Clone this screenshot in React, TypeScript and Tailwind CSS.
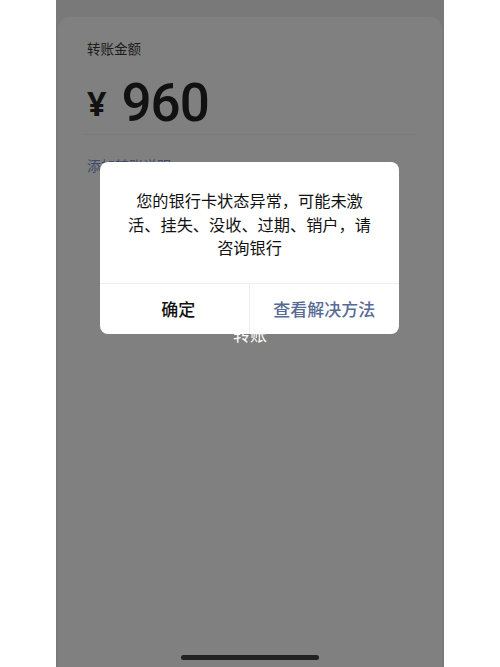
import React from "react";

const cjk = { fontFamily: '"Noto Sans CJK SC", "Noto Sans", sans-serif' };

export default function App() {
  return (
    <div className="w-[500px] h-[667px] bg-white flex justify-center overflow-hidden" style={cjk}>
      <div className="relative w-[388px] h-[667px] bg-[#797979] pt-[17px] px-[2px] flex flex-col">
        <div className="flex-1 bg-[#808080] rounded-t-[12px] px-[29px] pt-[21px] flex flex-col">
          <div className="text-[13.5px] leading-[20px] text-[#1c1c1c]">转账金额</div>
          <div className="mt-[19px] flex items-center h-[52px]">
            <span
              className="text-[34px] font-bold leading-none text-[#111] mr-[15px]"
              style={{ fontFamily: '"Noto Sans", sans-serif' }}
            >
              ¥
            </span>
            <span
              className="text-[53px] font-medium leading-none text-[#111] tracking-[-1px]"
              style={{ fontFamily: 'Roboto, "Noto Sans", sans-serif' }}
            >
              960
            </span>
          </div>
          <div className="mt-[5px] h-px bg-[#7b7b7b] -mx-[4px]" />
          <div className="mt-[20px] text-[14px] leading-[20px] text-[#3e4a6a]">添加转账说明</div>
          <div className="mt-[148px] text-center text-[17px] leading-[22px] text-white">转账</div>
        </div>

        <div className="absolute left-[44px] top-[162px] w-[299px] h-[172px] bg-white rounded-[8px] flex flex-col">
          <div className="flex-1 pt-[27px] px-[20px] text-center text-[16.2px] leading-[23.5px] text-[#111]">
            您的银行卡状态异常，可能未激
            <br />
            活、挂失、没收、过期、销户，请
            <br />
            咨询银行
          </div>
          <div className="h-[51px] border-t border-[#efefef] grid grid-cols-2">
            <div className="flex items-center justify-center text-[17px] font-medium text-[#111] border-r border-[#efefef]">
              <span className="ml-[8px]">确定</span>
            </div>
            <div className="flex items-center justify-center text-[17px] font-medium text-[#576b95]">
              查看解决方法
            </div>
          </div>
        </div>

        <div className="absolute left-[125px] top-[655px] w-[138px] h-[5px] rounded-full bg-[#222]" />
      </div>
    </div>
  );
}
